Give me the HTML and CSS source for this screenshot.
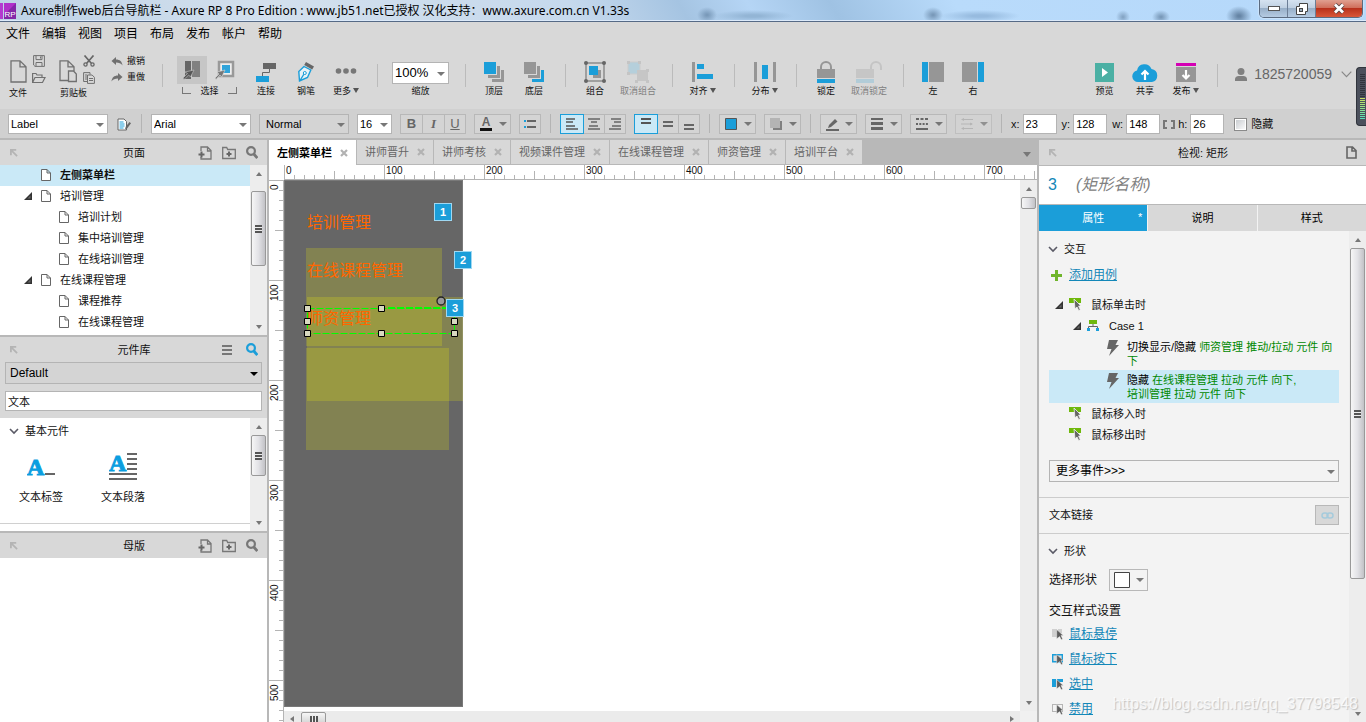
FILE: index.html
```html
<!DOCTYPE html>
<html lang="zh-CN">
<head>
<meta charset="utf-8">
<title>Axure制作web后台导航栏 - Axure RP 8 Pro Edition</title>
<link rel="stylesheet" href="styles.css">
</head>
<body>
<svg class="sprite" aria-hidden="true">
  <symbol id="i-page" viewBox="0 0 10 12"><path d="M.5.5H6L9.500 4v7.500H.5zM6 .5V4h3.500" fill="#fff" stroke="#666"/></symbol>
  <symbol id="i-collapse" viewBox="0 0 9 9"><path d="M1 7V1h6M1.500 1.500 8 8" fill="none" stroke="#b4b4b4" stroke-width="2"/></symbol>
  <symbol id="i-addpage" viewBox="0 0 14 14"><path d="M3 5V1h6.500L13 4.500V13H3v-2M9.500 1v4H13" fill="none" stroke="#777" stroke-width="1.300"/><path d="M3.500 5.500v6M.5 8.500h6" stroke="#666" stroke-width="2"/></symbol>
  <symbol id="i-addfolder" viewBox="0 0 14 14"><path d="M.7 12.500v-11h4l1 2h7.600v9z" fill="none" stroke="#777" stroke-width="1.300"/><path d="M7 5.500v5M4.500 8h5" stroke="#666" stroke-width="2"/></symbol>
  <symbol id="i-search" viewBox="0 0 12 13"><circle cx="5" cy="5" r="3.900" fill="none" stroke="currentColor" stroke-width="2.200"/><path d="m7.800 8 3.500 4" stroke="currentColor" stroke-width="2.800"/></symbol>
  <symbol id="i-expand" viewBox="0 0 8 8"><path d="M8 0v8H0z" fill="#333"/><path d="M6.500 3.500v3h-3z" fill="#666"/></symbol>
  <symbol id="i-chev" viewBox="0 0 10 7"><path d="m1 1 4 4 4-4" fill="none" stroke="#5a5a66" stroke-width="1.600"/></symbol>
  <symbol id="i-x" viewBox="0 0 8 8"><path d="m1 1 6 6M7 1 1 7" stroke="#b2b2b2" stroke-width="2.200"/></symbol>
  <symbol id="i-cursor" viewBox="0 0 14 14"><path d="M0 0h12v5H0z" fill="#6fb80b"/><path d="m5 1 7 7H9.600l1.700 3.800-1.600.8L8 9l-2 1.800z" fill="#666" stroke="#f3f3f3" stroke-width=".8"/></symbol>
  <symbol id="i-bolt" viewBox="0 0 12 16"><path d="M2 0h9L8.500 5H12L2 16l2.500-7H0z" fill="#666"/></symbol>
  <symbol id="i-ptr" viewBox="0 0 7 10"><path d="m.5.5 6 5.500H4.400L5.900 9l-1.300.7L3.200 6.900.5 8.900z" fill="#5c5c5c" stroke="#f3f3f3" stroke-width=".4"/></symbol>
</svg>

<header class="titlebar">
  <svg class="logo" width="16" height="16" viewBox="0 0 16 16"><path d="M0 0h3v16H0z" fill="#b43ad0"/><path d="M4 0h12v16H4z" fill="#8427a8"/><path d="M4 0h12L4 12z" fill="#b030ca"/><text x="4.500" y="13.500" class="logo-text">RP</text></svg>
  <h1>Axure制作web后台导航栏 - Axure RP 8 Pro Edition : www.jb51.net已授权 汉化支持：www.axure.com.cn V1.33s</h1>
  <div class="winbtns">
    <button aria-label="最小化"><svg width="12" height="5"><rect x=".5" y=".5" width="11" height="4" fill="#fff" stroke="#555"/></svg></button>
    <button aria-label="还原"><svg width="12" height="12"><path d="M3.500.5h8v8h-2v3h-9v-8h3z" fill="#fff" stroke="#444"/><rect x="3.500" y="5.500" width="3" height="3" fill="#9ab" stroke="#444"/></svg></button>
    <button class="close" aria-label="关闭"><svg width="12" height="11" viewBox="0 0 12 11"><path d="m2 1.500 8 8m0-8-8 8" stroke="#544" stroke-width="4.400"/><path d="m2 1.500 8 8m0-8-8 8" stroke="#fff" stroke-width="2.800"/></svg></button>
  </div>
</header>

<nav class="menubar">
  <button>文件</button><button>编辑</button><button>视图</button><button>项目</button><button>布局</button><button>发布</button><button>帐户</button><button>帮助</button>
</nav>

<div class="toolbar">
  <div class="quad">
    <button class="big" aria-label="新建"><svg width="17" height="23" viewBox="0 0 17 23" fill="none" stroke="#707070"><path d="M1 .8h9l6 6V22H1zM10 .8v6h6" stroke-width="1.300"/></svg></button>
    <button aria-label="保存"><svg width="12" height="12" viewBox="0 0 12 12" fill="none" stroke="#707070"><path d="M.6.600h10.800v10.800H2L.6 10zM3 .6v4h6v-4M3 11V7.500h6V11M7.500 1.500v2"/></svg></button>
    <button aria-label="打开"><svg width="14" height="12" viewBox="0 0 14 12" fill="none" stroke="#707070"><path d="M.6 10.500v-9H4l1 1.500h5v2.500M.6 10.500 3 5.500h10l-2.500 5z" stroke-width="1.200"/></svg></button>
    <span class="lbl">文件</span>
  </div>
  <div class="quad">
    <button class="big" aria-label="粘贴"><svg width="18" height="23" viewBox="0 0 18 23" fill="none" stroke="#707070" stroke-width="1.300"><path d="M9 20.500H1V.8h8l6 6V11M9 .8v6h6"/><path d="M9.500 11h5l2.800 3v7.500H9.500z" fill="#d8d8d8"/></svg></button>
    <button aria-label="剪切"><svg width="12" height="12" viewBox="0 0 12 12" fill="none" stroke="#666"><path d="m1.500.5 6.800 7.800M10.500.5 3.700 8.300" stroke-width="1.700"/><circle cx="2.500" cy="9.500" r="1.600" stroke-width="1.300"/><circle cx="9.500" cy="9.500" r="1.600" stroke-width="1.300"/></svg></button>
    <button aria-label="复制"><svg width="12" height="12" viewBox="0 0 12 12" fill="none" stroke="#707070"><path d="M4 9.500H.6V.6H7v2M4.500 3h4.600l2.300 2.300v6.100H4.500zM6 6.500h4M6 8.500h4M2 3h2M2 5h2M2 7h2"/></svg></button>
    <span class="lbl long">剪贴板</span>
  </div>
  <div class="history">
    <button><svg width="12" height="9" viewBox="0 0 12 9"><path d="M5 0v2.500c4 0 6 2 6.500 6C10 6.500 8 5.600 5 5.600V8L.5 4z" fill="#707070"/></svg>撤销</button>
    <button><svg width="12" height="9" viewBox="0 0 12 9"><path d="M7 0v2.500c-4 0-6 2-6.500 6C2 6.500 4 5.600 7 5.600V8l4.500-4z" fill="#707070"/></svg>重做</button>
  </div>
  <i class="sep first"></i>
  <div class="select-mode">
    <div class="pair">
      <button class="on" aria-label="相交选中"><svg width="22" height="20" viewBox="0 0 22 20"><path d="M4 1h6v18H4z" fill="#666"/><path d="M11 1h8v16h-8z" fill="#808080"/><path d="m13 10-3.500 7-1.800-2L3 19.500 2 18l4.500-4.500L4 12z" fill="#555" stroke="#c7c7c7" stroke-width=".6"/></svg></button>
      <button aria-label="包含选中"><svg width="22" height="20" viewBox="0 0 22 20"><path d="M4 2h14v14H4z" fill="#eee" stroke="#999" stroke-width="2.500"/><path d="M7 5h8v8H7z" fill="#30a4da"/><path d="m10 10-3.200 7-1.800-2-4 4.500-1-1.500 4-4L2 12z" fill="#777" stroke="#ddd" stroke-width=".6"/></svg></button>
    </div>
    <div class="bracket"><i></i><span class="lbl">选择</span><i></i></div>
  </div>
  <button class="tool link"><span class="ic"><svg width="20" height="20"><path d="M7 1h13v6H7z" fill="#666"/><path d="M0 14h13v6H0z" fill="#1b9ed9"/><path d="M13.500 7v3.500h-7V14" fill="none" stroke="#666"/></svg></span>连接</button>
  <button class="tool"><span class="ic"><svg width="16" height="20" viewBox="0 0 16 20"><path d="m8 0 8 4.500-1.800 3-8-4.500z" fill="#666"/><path d="M6 4.500.8 9.500 1.500 19 9.500 15.500 12.800 8zM2 18.500 6 12" fill="#e8f2f8" stroke="#1b9ed9" stroke-width="1.400"/><circle cx="6.800" cy="11" r="1.500" fill="#fff" stroke="#1b9ed9"/></svg></span>钢笔</button>
  <button class="tool"><span class="ic"><svg width="22" height="10"><circle cx="3.500" cy="4" r="2.800" fill="#777"/><circle cx="11" cy="4" r="2.800" fill="#777"/><circle cx="18.500" cy="4" r="2.800" fill="#777"/></svg></span><span>更多<b class="tri"></b></span></button>
  <i class="sep zoomsep"></i>
  <div class="zoom">
    <span class="sel"><select id="zoom"><option>100%</option></select></span>
    <label for="zoom">缩放</label>
  </div>
  <i class="sep zoomend"></i>
  <button class="tool"><span class="ic"><svg width="22" height="20"><path d="M18 8h3v12H9v-3h9z" fill="#969696"/><path d="M14 4h3v12H5v-3h9z" fill="#969696"/><path d="M1 0h12v12H1z" fill="#1b9ed9"/></svg></span>顶层</button>
  <button class="tool"><span class="ic"><svg width="22" height="20"><path d="M18 8h3v12H9v-3h9z" fill="#1b9ed9"/><path d="M14 4h3v12H5v-3h9z" fill="#969696"/><path d="M1 0h12v12H1z" fill="#969696"/></svg></span>底层</button>
  <i class="sep"></i>
  <button class="tool"><span class="ic"><svg width="22" height="22"><path d="M2 2h18v18H2z" fill="none" stroke="#666"/><path d="M9 9h8v8H9z" fill="#969696"/><path d="M5 5h9v9H5z" fill="#1b9ed9"/><circle cx="2" cy="2" r="2" fill="#666"/><circle cx="20" cy="2" r="2" fill="#666"/><circle cx="2" cy="20" r="2" fill="#666"/><circle cx="20" cy="20" r="2" fill="#666"/></svg></span>组合</button>
  <button class="tool wide off"><span class="ic"><svg width="22" height="22"><path d="M1 1h12v12H1z" fill="#b5cfdb" stroke="#ccc"/><path d="M10 9h11v11H10z" fill="#c6c6c6"/><path d="M0 0h3v3H0zM11 0h3v3h-3zM0 11h3v3H0zM19 8h3v3h-3zM8 19h3v3H8zM19 19h3v3h-3z" fill="#c4c4c4"/></svg></span>取消组合</button>
  <i class="sep"></i>
  <button class="tool more"><span class="ic"><svg width="22" height="21"><path d="M0 0h3v20H0z" fill="#969696"/><path d="M5 2h7v5H5zM5 12h16v5H5z" fill="#1b9ed9"/></svg></span><span>对齐<b class="tri"></b></span></button>
  <i class="sep"></i>
  <button class="tool more"><span class="ic"><svg width="22" height="20"><path d="M0 0h3v20H0zM19 0h3v20h-3z" fill="#969696"/><path d="M8 3h6v14H8z" fill="#1b9ed9"/></svg></span><span>分布<b class="tri"></b></span></button>
  <i class="sep"></i>
  <button class="tool"><span class="ic"><svg width="18" height="22"><path d="M4 9V6a5 5 0 0 1 10 0v3" fill="none" stroke="#969696" stroke-width="2"/><path d="M0 8h18v9H0z" fill="#969696"/><path d="M0 18h18v4H0z" fill="#1b9ed9"/></svg></span>锁定</button>
  <button class="tool wide off"><span class="ic"><svg width="26" height="22"><path d="M15 9V6a5 5 0 0 1 10 0v3" fill="none" stroke="#c4c4c4" stroke-width="2"/><path d="M0 8h18v9H0z" fill="#c6c6c6"/><path d="M0 18h18v4H0z" fill="#b2ccd8"/></svg></span>取消锁定</button>
  <i class="sep"></i>
  <button class="tool"><span class="ic"><svg width="22" height="20"><path d="M0 0h6v20H0z" fill="#1b9ed9"/><path d="M7 0h15v20H7z" fill="#969696"/></svg></span>左</button>
  <button class="tool"><span class="ic"><svg width="22" height="20"><path d="M0 0h15v20H0z" fill="#969696"/><path d="M16 0h6v20h-6z" fill="#1b9ed9"/></svg></span>右</button>
  <div class="right-tools">
    <button class="tool more"><span class="ic"><svg width="19" height="19"><path d="M0 0h19v19H0z" fill="#4bb0a4"/><path d="m7 5 6 4.500L7 14z" fill="#fff"/></svg></span>预览</button>
    <button class="tool"><span class="ic"><svg width="26" height="19" viewBox="0 0 26 19"><path d="M6 19a5.800 5.800 0 0 1-1-11.500A7.600 7.600 0 0 1 19.500 6 6.600 6.600 0 0 1 20 19z" fill="#1b9ed9"/><path d="M13 17V9M9.500 11.500 13 8l3.500 3.500" fill="none" stroke="#fff" stroke-width="2.200"/></svg></span>共享</button>
    <button class="tool more"><span class="ic"><svg width="20" height="19"><path d="M0 0h20v3H0z" fill="#d400b4"/><path d="M0 4h20v15H0z" fill="#969696"/><path d="M10 7v8M6.500 12 10 15.500l3.500-3.500" fill="none" stroke="#fff" stroke-width="2.200"/></svg></span><span>发布<b class="tri"></b></span></button>
    <i class="sep"></i>
    <button class="user"><svg width="12" height="13" viewBox="0 0 12 13"><circle cx="6" cy="3.500" r="3.500" fill="#808080"/><path d="M0 13v-2c0-2 2-3 3.500-3h5c1.500 0 3.500 1 3.500 3v2z" fill="#808080"/></svg>1825720059<svg width="11" height="7" viewBox="0 0 11 7"><path d="m.7.700 4.800 5 4.800-5" fill="none" stroke="#888" stroke-width="1.200"/></svg></button>
  </div>
</div>

<div class="formatbar">
  <span class="sel w100"><select aria-label="控件样式"><option>Label</option></select></span>
  <button class="plain" aria-label="样式管理"><svg width="14" height="13" viewBox="0 0 14 13"><path d="M1 1h6l2.500 2.500V12H1z" fill="#fff" stroke="#666"/><path d="M2.500 4h4M2.500 6h5M2.500 8h5M2.500 10h4" stroke="#1b9ed9"/><path d="m8 11.500.7-2.700L12.500 4 14 5.200l-3.700 5z" fill="#666"/></svg></button>
  <i class="sep"></i>
  <span class="sel w100"><select aria-label="字体"><option>Arial</option></select></span>
  <span class="sel w90 gray"><select aria-label="字形"><option>Normal</option></select></span>
  <span class="sel w35"><select aria-label="字号"><option>16</option></select></span>
  <div class="seg"><button><b>B</b></button><button><em>I</em></button><button><u>U</u></button></div>
  <button class="drop" aria-label="文字颜色"><span class="acolor">A</span><b class="tri"></b></button>
  <div class="seg"><button aria-label="项目符号"><svg width="12" height="9"><path d="M0 0h2v2H0zM0 6h2v2H0z" fill="#1b9ed9"/><path d="M3 1h9M3 7h9" stroke="#666" stroke-width="2"/></svg></button></div>
  <i class="sep"></i>
  <div class="seg">
    <button class="act" aria-label="左对齐"><svg width="12" height="12"><path d="M0 1h9M0 4h7M0 8h9M0 11h12" stroke="#555" stroke-width="1.500"/></svg></button>
    <button aria-label="居中"><svg width="12" height="12"><path d="M0 1h12M3 4h6M1 8h9M0 11h12" stroke="#666" stroke-width="1.500"/></svg></button>
    <button aria-label="右对齐"><svg width="12" height="12"><path d="M2 1h10M5 4h7M3 8h9M0 11h12" stroke="#666" stroke-width="1.500"/></svg></button>
  </div>
  <div class="seg">
    <button class="act" aria-label="顶部对齐"><svg width="10" height="14"><path d="M0 2h10M0 6h10" stroke="#555" stroke-width="2"/></svg></button>
    <button aria-label="垂直居中"><svg width="10" height="14"><path d="M0 5h10M0 9h10" stroke="#666" stroke-width="2"/></svg></button>
    <button aria-label="底部对齐"><svg width="10" height="14"><path d="M0 8h10M0 12h10" stroke="#666" stroke-width="2"/></svg></button>
  </div>
  <i class="sep"></i>
  <button class="drop" aria-label="填充"><svg width="12" height="12"><path d="M.5.500h11v11H.5z" fill="#1b9ed9" stroke="#555"/></svg><b class="tri"></b></button>
  <button class="drop" aria-label="阴影"><svg width="12" height="12"><path d="M3 3h9v9H3z" fill="#808080"/><path d="M0 0h10v10H0z" fill="#b4b4b4"/></svg><b class="tri"></b></button>
  <i class="sep"></i>
  <button class="drop" aria-label="线条颜色"><svg width="13" height="13"><path d="M0 12h13" stroke="#666" stroke-width="2"/><path d="M2 10 3 7l6-6 2.500 2.500L5 9z" fill="#666"/></svg><b class="tri"></b></button>
  <button class="drop" aria-label="线宽"><svg width="12" height="12"><path d="M0 1h12" stroke="#666" stroke-width="2"/><path d="M0 5.500h12" stroke="#666" stroke-width="3"/><path d="M0 10.500h12" stroke="#666" stroke-width="3"/></svg><b class="tri"></b></button>
  <button class="drop" aria-label="线型"><svg width="12" height="12"><path d="M0 1h12" stroke="#666" stroke-width="2" stroke-dasharray="3 1.500"/><path d="M0 6h12" stroke="#666" stroke-width="2" stroke-dasharray="2 1.300"/><path d="M0 11h12" stroke="#666" stroke-width="2"/></svg><b class="tri"></b></button>
  <button class="drop dim" aria-label="箭头"><svg width="12" height="12"><path d="M1 1.500h11M0 6h11M1 10.500h11" stroke="#aaa"/><path d="M3 0 0 1.500 3 3zM9 4.500 12 6 9 7.500zM3 9l-3 1.500L3 12z" fill="#aaa"/></svg><b class="tri"></b></button>
  <i class="sep"></i>
  <div class="coords">
    <label>x: <input value="23"></label>
    <label>y: <input value="128"></label>
    <label>w: <input value="148"></label>
    <svg width="12" height="9"><path d="M4 1H1v7h3M8 1h3v7H8" fill="none" stroke="#777" stroke-width="2"/></svg>
    <label>h: <input value="26"></label>
  </div>
  <label class="hide"><input type="checkbox">隐藏</label>
</div>

<main class="work">
  <aside class="left">
    <section class="pages">
      <div class="phead"><svg width="8" height="8"><use href="#i-collapse"/></svg><h2>页面</h2><div class="acts"><button aria-label="添加页面"><svg width="14" height="14"><use href="#i-addpage"/></svg></button><button aria-label="添加文件夹"><svg width="14" height="14"><use href="#i-addfolder"/></svg></button><button aria-label="搜索"><svg width="12" height="13"><use href="#i-search"/></svg></button></div></div>
      <div class="pbody">
        <ul class="tree">
          <li class="cur"><i class="tw"></i><svg width="10" height="12"><use href="#i-page"/></svg>左侧菜单栏</li>
          <li><svg class="tw" width="8" height="8"><use href="#i-expand"/></svg><svg width="10" height="12"><use href="#i-page"/></svg>培训管理</li>
          <li class="sub"><svg width="10" height="12"><use href="#i-page"/></svg>培训计划</li>
          <li class="sub"><svg width="10" height="12"><use href="#i-page"/></svg>集中培训管理</li>
          <li class="sub"><svg width="10" height="12"><use href="#i-page"/></svg>在线培训管理</li>
          <li><svg class="tw" width="8" height="8"><use href="#i-expand"/></svg><svg width="10" height="12"><use href="#i-page"/></svg>在线课程管理</li>
          <li class="sub"><svg width="10" height="12"><use href="#i-page"/></svg>课程推荐</li>
          <li class="sub"><svg width="10" height="12"><use href="#i-page"/></svg>在线课程管理</li>
        </ul>
        <div class="vbar"><i class="up"></i><div class="track"><b class="thumb grip t-pages"></b></div><i class="down"></i></div>
      </div>
    </section>
    <section class="library">
      <div class="phead"><svg width="8" height="8"><use href="#i-collapse"/></svg><h2>元件库</h2><div class="acts"><button aria-label="菜单"><svg width="10" height="10"><path d="M0 1h10M0 5h10M0 9h10" stroke="#777" stroke-width="2"/></svg></button><button class="blue" aria-label="搜索"><svg width="12" height="13"><use href="#i-search"/></svg></button></div></div>
      <div class="libtop">
        <span class="sel dark"><select aria-label="元件库"><option>Default</option></select></span>
        <input aria-label="搜索元件" value="文本">
      </div>
      <div class="pbody">
        <div class="widgets">
          <h3><svg width="10" height="7"><use href="#i-chev"/></svg>基本元件</h3>
          <div class="wgrid">
            <figure><svg width="28" height="30"><text x="0" y="24" class="bigA">A</text><path d="M18 23h10" stroke="#666" stroke-width="2"/></svg><figcaption>文本标签</figcaption></figure>
            <figure><svg width="28" height="30"><text x="0" y="20" class="bigA">A</text><path d="M18 3h10M18 8h10M18 13h10M18 18h10M0 23h28M0 28h28" stroke="#666" stroke-width="2"/></svg><figcaption>文本段落</figcaption></figure>
          </div>
        </div>
        <div class="vbar"><i class="up"></i><div class="track"><b class="thumb grip t-lib"></b></div><i class="down"></i></div>
      </div>
    </section>
    <section class="masters">
      <div class="phead"><svg width="8" height="8"><use href="#i-collapse"/></svg><h2>母版</h2><div class="acts"><button aria-label="添加母版"><svg width="14" height="14"><use href="#i-addpage"/></svg></button><button aria-label="添加文件夹"><svg width="14" height="14"><use href="#i-addfolder"/></svg></button><button aria-label="搜索"><svg width="12" height="13"><use href="#i-search"/></svg></button></div></div>
    </section>
  </aside>

  <section class="center">
    <div class="tabs">
      <button class="cur">左侧菜单栏<svg width="8" height="8"><use href="#i-x"/></svg></button>
      <button>讲师晋升<svg width="8" height="8"><use href="#i-x"/></svg></button>
      <button>讲师考核<svg width="8" height="8"><use href="#i-x"/></svg></button>
      <button>视频课件管理<svg width="8" height="8"><use href="#i-x"/></svg></button>
      <button>在线课程管理<svg width="8" height="8"><use href="#i-x"/></svg></button>
      <button>师资管理<svg width="8" height="8"><use href="#i-x"/></svg></button>
      <button>培训平台<svg width="8" height="8"><use href="#i-x"/></svg></button>
      <b class="tri"></b>
    </div>
    <div class="stage">
      <div class="hruler"><span>0</span><span>100</span><span>200</span><span>300</span><span>400</span><span>500</span><span>600</span><span>700</span></div>
      <div class="vruler"><span>0</span><span>100</span><span>200</span><span>300</span><span>400</span><span>500</span></div>
      <div class="canvas">
        <div class="board"></div>
        <div class="mask m1"></div><div class="mask m2"></div><div class="mask m3"></div>
        <div class="text t1">培训管理</div><div class="text t2">在线课程管理</div><div class="text t3">师资管理</div>
        <svg class="selection" width="156" height="42"><path d="M4.500 12.500h147v25H4.500z" fill="none" stroke="#0f0" stroke-dasharray="7 2"/><path d="M85 12h67" stroke="#0f0" stroke-width="2" stroke-dasharray="7 2"/><circle cx="138" cy="5" r="4" fill="#999" stroke="#222" stroke-width="1.300"/><path d="M1.500 9.500h6v6h-6zM75.500 9.500h6v6h-6zM1.500 22.500h6v6h-6zM148.500 22.500h6v6h-6zM1.500 34.500h6v6h-6zM75.500 34.500h6v6h-6zM148.500 34.500h6v6h-6z" fill="#d8d8c0" stroke="#000"/></svg>
        <span class="note n1">1</span><span class="note n2">2</span><span class="note n3">3</span>
      </div>
      <div class="vbar"><i class="up"></i><div class="track"><b class="thumb t-canvas"></b></div><i class="down"></i></div>
      <div class="hbar"><i class="prev"></i><b class="thumb"></b><i class="next"></i></div>
      <div class="corner"></div>
    </div>
  </section>

  <aside class="inspector">
    <div class="phead"><svg width="8" height="8"><use href="#i-collapse"/></svg><h2>检视: 矩形</h2><div class="acts"><button aria-label="页面"><svg width="11" height="13" viewBox="0 0 11 13"><path d="M1 1h5.500L10 4.500V12H1zM6 1v4h4" fill="none" stroke="#666" stroke-width="1.600"/></svg></button></div></div>
    <div class="name"><span>3</span><em>(矩形名称)</em></div>
    <div class="itabs"><button class="cur">属性<sup>*</sup></button><button>说明</button><button>样式</button></div>
    <div class="ibody">
      <div class="props">
        <div class="block">
          <h3><svg width="10" height="7"><use href="#i-chev"/></svg>交互</h3>
          <div class="addcase"><svg width="11" height="11"><path d="M5.500 0v11M0 5.500h11" stroke="#6fb52b" stroke-width="3"/></svg><a href="#">添加用例</a></div>
          <ul class="events">
            <li><svg width="8" height="8"><use href="#i-expand"/></svg><svg class="cur-ic" width="14" height="14"><use href="#i-cursor"/></svg>鼠标单击时</li>
            <li class="case"><svg width="8" height="8"><use href="#i-expand"/></svg><svg width="12" height="12"><path d="M2 0h8v4H2z" fill="#6fb80b"/><path d="M6 4v2.500M1.500 9V6.500h9V9" fill="none" stroke="#666"/><path d="M0 8h3v3H0zM9 8h3v3H9z" fill="#1b9ed9"/></svg>Case 1</li>
            <li class="action"><svg width="12" height="16"><use href="#i-bolt"/></svg><p>切换显示/隐藏 <span>师资管理 推动/拉动 元件 向下</span></p></li>
            <li class="action hl"><svg width="12" height="16"><use href="#i-bolt"/></svg><p>隐藏 <span>在线课程管理 拉动 元件 向下,<br>培训管理 拉动 元件 向下</span></p></li>
            <li class="flat"><svg class="cur-ic" width="14" height="14"><use href="#i-cursor"/></svg>鼠标移入时</li>
            <li class="flat"><svg class="cur-ic" width="14" height="14"><use href="#i-cursor"/></svg>鼠标移出时</li>
          </ul>
          <span class="sel events-sel"><select aria-label="更多事件"><option>更多事件&gt;&gt;&gt;</option></select></span>
        </div>
        <div class="block textlink"><span>文本链接</span><button aria-label="插入链接"><svg width="13" height="7"><rect x="1" y="1" width="6" height="5" rx="2.500" fill="none" stroke="#a6cbdc" stroke-width="1.500"/><rect x="6" y="1" width="6" height="5" rx="2.500" fill="none" stroke="#a6cbdc" stroke-width="1.500"/></svg></button></div>
        <div class="block last">
          <h3><svg width="10" height="7"><use href="#i-chev"/></svg>形状</h3>
          <div class="shape"><span>选择形状</span><button class="drop" aria-label="选择形状"><svg width="16" height="16"><path d="M.5.500h15v15H.5z" fill="#fff" stroke="#444"/></svg><b class="tri"></b></button></div>
          <p class="cap">交互样式设置</p>
          <ul class="states">
            <li><svg width="12" height="12"><path d="M0 1h5v8H0zM6 1h4v4H6z" fill="#d0d0d0"/><use href="#i-ptr" x="4" y="1" width="8" height="11"/></svg><a href="#">鼠标悬停</a></li>
            <li><svg width="12" height="12"><path d="M.7 1.700h9.600v7H.7z" fill="#ddd" stroke="#1b9ed9" stroke-width="1.400"/><use href="#i-ptr" x="4" y="1" width="8" height="11"/></svg><a href="#">鼠标按下</a></li>
            <li><svg width="12" height="12"><path d="M0 1h4v8H0zM5 1h6v3H5z" fill="#1b9ed9"/><use href="#i-ptr" x="4" y="1" width="8" height="11"/></svg><a href="#">选中</a></li>
            <li><svg width="12" height="12"><path d="M.5 1.500h10v7H.5z" fill="none" stroke="#777" stroke-dasharray="1 1"/><use href="#i-ptr" x="4" y="1" width="8" height="11"/></svg><a href="#">禁用</a></li>
          </ul>
        </div>
      </div>
      <div class="vbar"><i class="up"></i><div class="track"><b class="thumb grip t-props"></b></div><i class="down"></i></div>
    </div>
  </aside>
</main>
<div class="meter"></div>
<div class="watermark">https://blog.csdn.net/qq_37798548</div>
</body>
</html>
```
FILE: styles.css
```css
* { box-sizing: border-box; }
body {
  margin: 0; height: 100vh; display: flex; flex-direction: column; overflow: hidden; position: relative;
  font: 11px/14px "Liberation Sans", "Noto Sans CJK SC", sans-serif; color: #111; background: #d8d8d8;
}
button, input, select { font: inherit; color: inherit; margin: 0; padding: 0; border: 0; background: none; border-radius: 0; }
h1, h2, h3, p, ul, figure { margin: 0; padding: 0; font-size: inherit; font-weight: normal; list-style: none; }
svg { flex: none; display: block; }
.sprite { position: absolute; width: 0; height: 0; }
.tri { border: 4px solid transparent; border-top: 4px solid #777; border-bottom: 0; width: 0; height: 0; flex: none; }

/* title bar */
.titlebar {
  height: 22px; flex: none; display: flex; align-items: center; gap: 5px; border-bottom: 1px solid #566a86; box-shadow: inset 0 -1px #dceafa;
  background:
    radial-gradient(ellipse 10px 8px at 707px 15px, #7a9aba 10%, transparent),
    radial-gradient(ellipse 40px 6px at 753px 16px, #93b5d5 20%, transparent),
    radial-gradient(ellipse 10px 8px at 933px 15px, #7a9aba 10%, transparent),
    radial-gradient(ellipse 40px 6px at 980px 16px, #97bbdf 20%, transparent),
    radial-gradient(ellipse 7px 7px at 1123px 17px, #86a6c6 10%, transparent),
    radial-gradient(ellipse 9px 7px at 1161px 17px, #7a9aba 10%, transparent),
    radial-gradient(ellipse 13px 10px at 1239px 16px, #6685a5 10%, transparent),
    linear-gradient(60deg, #bdd2e6 0, #d3e0ed 20%, #c6d9ed 42%, #a5c4e2 50%, #b5d5f5 55%, #9fc2e3 61%, #b9dbfb 70%, #b5d8fa 100%);
}
.logo-text { font: 8px "Liberation Sans", sans-serif; fill: #fff; }
.titlebar h1 { font: 12px/20px "Noto Sans", "Noto Sans CJK SC", sans-serif; white-space: nowrap; color: #000; }
.winbtns { margin: 0 3px 0 auto; display: flex; align-self: flex-start; height: 18px; border: 1px solid #5b6b80; border-top: 0; border-radius: 0 0 5px 5px; overflow: hidden; box-shadow: 0 0 2px #fff; }
.winbtns button { width: 28px; display: flex; align-items: center; justify-content: center; border-right: 1px solid #6c7e96; background: linear-gradient(#d5e2f0, #bfd0e2 45%, #98afc8 50%, #b5cbe2); }
.winbtns .close { width: 46px; border: 0; background: linear-gradient(#e0a090, #d0705c 45%, #b8321c 50%, #d8583a); }

.menubar { height: 24px; flex: none; display: flex; gap: 12px; padding-left: 6px; font-size: 12px; color: #000; }

/* main toolbar */
.toolbar { height: 63px; flex: none; display: flex; align-items: flex-start; padding-top: 6px; font-size: 9px; color: #111; white-space: nowrap; }
.quad { display: grid; grid-template: 17px 17px 14px / 20px 22px; justify-items: center; align-items: center; margin-left: 8px; }
.quad .big { grid-row: 1 / 3; align-self: end; padding-bottom: 3px; }
.quad button { display: flex; }
.quad .lbl { grid-column: 1; }
.quad .long { grid-column: 1 / 3; justify-self: start; padding-left: 2px; }
.history { margin-left: 11px; display: grid; grid-auto-rows: 16px; padding-top: 1px; }
.history button { display: flex; align-items: center; gap: 4px; }
.toolbar .sep { width: 1px; height: 23px; margin: 12px 9px 0 11px; background: #bbb; flex: none; }
.toolbar .first { margin: 12px 14px 0 17px; }
.toolbar .zoomsep { margin-right: 14px; }
.toolbar .zoomend { margin: 12px 8px 0 16px; }
.select-mode { padding-top: 4px; width: 69px; }
.pair { display: flex; gap: 4px; }
.pair button { width: 30px; height: 28px; display: flex; align-items: center; justify-content: center; }
.pair .on { background: #c6c6c6; }
.bracket { display: flex; justify-content: space-between; width: 64px; padding: 0 4px 0 5px; }
.bracket i { width: 9px; height: 7px; margin-top: 3px; border-bottom: 1px solid #777; border-left: 1px solid #777; }
.bracket i:last-child { border-left: 0; border-right: 1px solid #777; }
.tool { width: 40px; padding-top: 4px; display: flex; flex-direction: column; align-items: center; flex: none; line-height: 14px; }
.tool .ic { height: 28px; width: 100%; display: flex; align-items: center; justify-content: center; padding-top: 4px; }
.tool .tri { display: inline-block; margin: 0 0 1px 2px; border-width: 5px 3px 0; border-top-color: #555; }
.tool.more { width: 41px; }
.tool.wide { width: 46px; }
.tool.off { color: #808080; }
.zoom { width: 57px; padding-top: 10px; display: flex; flex-direction: column; align-items: center; }
.zoom .sel { width: 100%; height: 22px; font-size: 13px; }
.right-tools { margin-left: auto; display: flex; padding-right: 14px; }
.right-tools .sep { margin-right: 17px; }
.user { display: flex; align-items: center; gap: 7px; height: 24px; margin-top: 10px; font-size: 14px; color: #666; }
.user svg:last-child { margin-left: 2px; }

/* selects */
.sel { position: relative; display: block; border: 1px solid #b4b4b4; background: #fff; height: 20px; flex: none; color: #000; }
.sel select { appearance: none; width: 100%; height: 100%; padding: 0 12px 0 2px; display: block; outline: 0; }
.sel::after { content: ""; position: absolute; right: 3px; top: 50%; margin-top: -1px; border: 4px solid transparent; border-top-color: #777; border-bottom: 0; pointer-events: none; }

/* format bar */
.formatbar { height: 31px; flex: none; display: flex; align-items: flex-start; gap: 8px; padding: 5px 8px; background: #d0d0d0; border-bottom: 2px solid #b8b8b8; white-space: nowrap; }
.formatbar .sep { width: 1px; height: 19px; margin: 0 1px; background: #b4b4b4; flex: none; }
.w100 { width: 100px; }
.w90 { width: 90px; }
.w35 { width: 35px; }
.gray { background: #d4d4d4; }
.gray select { padding-left: 6px; }
.plain { width: 16px; height: 20px; display: flex; align-items: center; justify-content: center; }
.seg { display: flex; border: 1px solid #b8b8b8; background: #d4d4d4; height: 20px; flex: none; }
.seg button { width: 22px; display: flex; align-items: center; justify-content: center; border-right: 1px solid #b8b8b8; color: #666; font-size: 13px; }
.seg button:last-child { border-right: 0; width: 20px; }
.seg .act { background: #cae9f7; outline: 1px solid #1b9ed9; border: 0; }
.seg em { font-family: "Liberation Serif", serif; font-weight: bold; }
.drop { width: 37px; height: 20px; border: 1px solid #b8b8b8; background: #d4d4d4; display: flex; align-items: center; justify-content: space-between; padding: 0 3px 0 5px; flex: none; }
.acolor { font-weight: bold; font-size: 12px; line-height: 11px; border-bottom: 3px solid #111; width: 12px; color: #666; }
.dim { opacity: .7; }
.coords { display: flex; align-items: center; gap: 5px; font-size: 11px; }
.coords svg { margin: 0 -2px; }
.coords label { display: flex; align-items: center; gap: 3px; }
.coords input { width: 34px; height: 20px; border: 1px solid #b4b4b4; background: #fff; padding-left: 2px; color: #000; }
.hide { display: flex; align-items: center; gap: 4px; height: 20px; padding-left: 2px; }
.hide input { appearance: none; width: 13px; height: 13px; border: 1px solid #8a8a8a; background: linear-gradient(135deg, #c4c8cc, #fff); box-shadow: inset 0 0 0 1px #fff; }

/* panels */
.work { flex: 1; min-height: 0; display: grid; grid-template-columns: 269px 1fr 329px; }
.left { border-right: 2px solid #b8b8b8; background: #fff; min-height: 0; display: flex; flex-direction: column; }
.left section + section { border-top: 2px solid #b8b8b8; }
.phead { height: 25px; background: #d8d8d8; display: grid; grid-template-columns: 72px 1fr 72px; align-items: center; padding: 0 9px 0 10px; }
.phead h2 { text-align: center; }
.acts { display: flex; justify-content: flex-end; gap: 10px; color: #777; }
.acts button { display: flex; align-items: center; }
.acts .blue { color: #1b9ed9; margin-left: 4px; }
.pbody { display: flex; }
.tree { flex: 1; height: 170px; overflow: hidden; }
.tree li { height: 21px; display: flex; align-items: center; gap: 9px; padding: 0 0 1px 24px; }
.tree .tw { width: 8px; flex: none; }
.tree .sub { padding-left: 59px; }
.tree .cur { background: #cae9f7; font-weight: bold; }
.libtop { background: #d8d8d8; padding: 0 5px 7px; display: grid; gap: 7px; }
.libtop .sel { height: 22px; background: #d4d4d4; font-size: 12px; }
.libtop .sel select { padding-left: 4px; }
.libtop .sel::after { border-top-color: #000; }
.libtop input { height: 20px; border: 1px solid #b4b4b4; background: #fff; padding: 0 2px; width: 100%; }
.widgets { flex: 1; height: 113px; padding-top: 6px; }
.widgets h3, .props h3 { display: flex; align-items: center; gap: 6px; }
.widgets h3 { padding-left: 9px; }
.wgrid { display: flex; padding: 13px 0 0; border-bottom: 1px solid #d0d0d0; height: 86px; }
.wgrid figure { width: 82px; display: flex; flex-direction: column; align-items: center; gap: 9px; }
.bigA { font: bold 24px "Liberation Serif", serif; fill: #0b9ee0; stroke: #0b9ee0; stroke-width: 1px; }

/* scroll bars */
.vbar { width: 17px; background: #ededed; display: flex; flex-direction: column; align-items: center; flex: none; padding: 7px 0 6px; }
.up { border: 3px solid transparent; border-top: 0; border-bottom: 4px solid #777; }
.down { border: 3px solid transparent; border-bottom: 0; border-top: 4px solid #777; }
.track { flex: 1; width: 15px; padding: 6px 0; }
.thumb { display: flex; border: 1px solid #999; border-radius: 2px; background: linear-gradient(90deg, #f6f6f6, #e2e2e6 50%, #c2c2c6); }
.grip { align-items: center; justify-content: center; }
.grip::before { content: ""; width: 7px; height: 8px; background: repeating-linear-gradient(#555 0 2px, #eee 2px 3px); }
.t-pages { height: 75px; margin-top: 9px; }
.t-lib { height: 41px; }
.t-canvas { height: 12px; }
.t-props { height: 331px; }

/* document area */
.center { display: flex; flex-direction: column; min-width: 0; min-height: 0; }
.tabs { height: 25px; flex: none; display: flex; background: #b8b8b8; color: #666; }
.tabs button { display: flex; align-items: center; gap: 8px; padding: 0 8px; background: #d8d8d8; height: 24px; margin-right: 1px; white-space: nowrap; flex: none; }
.tabs .cur { background: #fff; color: #000; font-weight: bold; height: 25px; }
.tabs > .tri { margin: 12px 6px 0 auto; border-width: 5px 4px 0; }
.stage { flex: 1; min-height: 0; display: grid; grid-template: 15px 1fr 11px / 15px 1fr 17px; background: #fff; }
.hruler { grid-column: 2 / 4; display: flex; overflow: hidden; border-bottom: 1px solid #b4b4b4; font-size: 10px; line-height: 12px; }
.hruler span {
  flex: 0 0 100px; padding-left: 2px;
  background: linear-gradient(#b4b4b4, #b4b4b4) 0 0 / 1px 100% no-repeat, linear-gradient(#b4b4b4, #b4b4b4) 50px 100% / 1px 8px no-repeat, repeating-linear-gradient(90deg, #b4b4b4 0 1px, transparent 1px 10px) 0 100% / 100% 4px no-repeat;
}
.vruler { grid-row: 2 / 4; overflow: hidden; border-right: 1px solid #b4b4b4; font-size: 10px; line-height: 12px; }
.vruler span {
  display: block; height: 100px; width: 14px; padding: 0 0 4px; writing-mode: vertical-rl; transform: rotate(180deg); text-align: right;
  background: linear-gradient(#b4b4b4, #b4b4b4) 0 100% / 100% 1px no-repeat, linear-gradient(#b4b4b4, #b4b4b4) 0 49px / 8px 1px no-repeat, repeating-linear-gradient(0deg, #b4b4b4 0 1px, transparent 1px 10px) 0 0 / 4px 100% no-repeat;
}
.canvas { position: relative; overflow: hidden; background: #fff; }
.canvas > * { position: absolute; }
.board { left: 0; top: 0; width: 179px; height: 527px; background: #666; border: 1px solid #797979; }
.text { left: 23px; font-size: 16px; line-height: 24px; color: #ff6600; white-space: nowrap; }
.t1 { top: 31px; }
.t2 { top: 79px; }
.t3 { top: 127px; }
.mask { background: rgba(255, 255, 0, .19); }
.m1 { left: 22px; top: 68px; width: 136px; height: 98px; }
.m2 { left: 23px; top: 117px; width: 156px; height: 104px; }
.m3 { left: 22px; top: 168px; width: 143px; height: 102px; }
.selection { left: 19px; top: 116px; }
.note { width: 18px; height: 18px; border: 1px solid #9fd8f2; background: #1b9ed9; color: #fff; font-weight: bold; line-height: 16px; text-align: center; }
.n1 { left: 150px; top: 23px; }
.n2 { left: 170px; top: 71px; }
.n3 { left: 162px; top: 119px; }
.hbar { background: #ebebeb; display: flex; overflow: hidden; padding: 1px 6px 0; }
.prev, .next { border: 3px solid transparent; height: 6px; margin-top: 4px; }
.prev { border-left: 0; border-right: 4px solid #777; }
.next { border-right: 0; border-left: 4px solid #777; margin-left: auto; }
.hbar .thumb { width: 25px; height: 16px; margin-left: 7px; background: linear-gradient(#f6f6f6, #c8c8c8); justify-content: center; padding-top: 3px; }
.hbar .thumb::before { content: ""; width: 8px; height: 8px; background: repeating-linear-gradient(90deg, #555 0 2px, #eee 2px 3px); }
.corner { background: #f0f0f0; }

/* inspector */
.inspector { border-left: 2px solid #b8b8b8; display: flex; flex-direction: column; min-height: 0; background: #f3f3f3; }
.inspector .phead { flex: none; }
.name { height: 40px; flex: none; background: #fff; border: 1px solid #b8b8b8; border-width: 1px 0; display: flex; align-items: center; gap: 19px; padding-left: 9px; font-size: 16px; color: #1387b8; }
.name em { color: #808080; }
.itabs { flex: none; display: flex; gap: 1px; height: 26px; }
.itabs button { flex: 1; background: #d8d8d8; position: relative; color: #000; }
.itabs .cur { background: #1b9ed9; color: #fff; }
.itabs sup { position: absolute; right: 5px; top: 6px; line-height: 12px; font-size: 11px; }
.ibody { flex: 1; min-height: 0; display: flex; overflow: hidden; }
.props { flex: 1; min-width: 0; }
.block { padding: 11px 10px 15px; border-bottom: 1px solid #ccc; }
.block h3 { margin-left: -1px; }
a { color: #1387b8; font-size: 12px; }
.addcase { display: flex; align-items: center; gap: 7px; padding: 12px 0 12px 2px; }
.events li { height: 21px; display: flex; align-items: center; gap: 6px; padding-left: 6px; }
.events .cur-ic { margin-right: 2px; }
.events .case { padding-left: 24px; }
.events .case svg:last-of-type { margin-right: 4px; }
.events .flat { padding-left: 20px; }
.events .action { height: auto; align-items: flex-start; gap: 8px; padding: 3px 0 2px 58px; color: #000; }
.events .case + .action { padding-top: 4px; }
.events .action p { padding-right: 4px; }
.action span { color: #080; }
.hl { background: #cae9f7; }
.events-sel { margin-top: 15px; height: 22px; background: #f3f3f3; font-size: 12px; }
.events-sel select { padding-left: 6px; }
.textlink { display: flex; align-items: center; justify-content: space-between; padding: 7px 10px 8px; }
.textlink button { width: 24px; height: 20px; border: 1px solid #b8b8b8; background: #d8d8d8; display: flex; align-items: center; justify-content: center; }
.last { border: 0; padding-top: 10px; }
.shape { display: flex; align-items: center; gap: 12px; padding: 11px 0; font-size: 12px; }
.shape .drop { width: 39px; height: 22px; background: #f3f3f3; padding-left: 4px; }
.cap { font-size: 12px; line-height: 19px; }
.states li { display: flex; align-items: center; gap: 5px; height: 25px; padding-left: 3px; }

/* floating overlays */
.meter { position: absolute; right: 0; top: 67px; width: 10px; height: 59px; border: 1px solid #30343c; border-right: 0; border-radius: 4px 0 0 4px; background: repeating-linear-gradient(transparent 0 1px, #4b505c 1px 2px) 3px 6px / 5px 46px no-repeat, linear-gradient(#30343c 50%, #cfe05a 50%, #4fe0c0) 3px 6px / 5px 46px no-repeat, #4b505c; }
.watermark { position: absolute; right: 8px; bottom: 8px; font: 16px/20px "Liberation Sans", sans-serif; color: rgba(255, 255, 255, .75); text-shadow: 1px 1px 1px rgba(0, 0, 0, .2); pointer-events: none; }
```
